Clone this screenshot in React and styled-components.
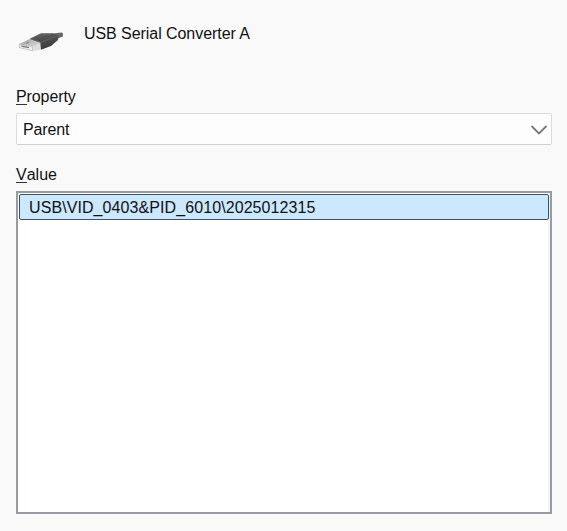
import React from "react";
import styled, { createGlobalStyle } from "styled-components";

const GlobalStyle = createGlobalStyle`
  * { box-sizing: border-box; }
  body {
    margin: 0;
    background: #f9f9f9;
    color: #111;
    font: 16px/20px "Liberation Sans", Arial, sans-serif;
  }
`;

const Page = styled.main`
  display: flex;
  flex-direction: column;
  height: 531px;
  padding: 24px 15px 17px 16px;
  overflow: hidden;
`;

const DeviceHeader = styled.header`
  display: flex;
  height: 63px;
  padding-left: 2px;
  gap: 18px;
`;

const DeviceIcon = styled.svg`
  width: 48px;
  height: 34px;
  flex: none;
`;

const DeviceName = styled.span`
  letter-spacing: -0.06px;
`;

const FieldLabel = styled.label`
  height: 20px;
  margin-bottom: ${(p) => p.$gap}px;
  letter-spacing: ${(p) => p.$spacing || 0}px;
`;

const AccessKey = styled.span`
  display: inline-block;
  height: 18px;
  border-bottom: 1px solid #333;
`;

const Select = styled.div`
  display: flex;
  align-items: center;
  justify-content: space-between;
  height: 32px;
  margin-bottom: 20px;
  padding: 1px 3px 0 6px;
  background: #fdfdfd;
  border: 1px solid #dcdcdc;
  border-bottom-color: #d0d0d0;
  border-radius: 2px;
  letter-spacing: -0.15px;
`;

const Chevron = styled.svg`
  width: 18px;
  height: 12px;
`;

const ValueList = styled.div`
  flex: 1;
  padding: 1px;
  background: #fff;
  border: 2px solid #979ca3;
  box-shadow: inset -2px 0 #f0f5fa;
`;

const ValueRow = styled.div`
  display: flex;
  align-items: center;
  height: 26px;
  padding: 2px 0 0 9px;
  background: #cce8ff;
  border: 1px solid #3f5161;
  border-radius: 2px;
  letter-spacing: 0.085px;
`;

function UsbPlug() {
  return (
    <DeviceIcon viewBox="0 0 48 34" aria-hidden="true">
      <defs>
        <linearGradient id="plugBody" x1="0" y1="0" x2="0.3" y2="1">
          <stop offset="0" stopColor="#6a6a6a" />
          <stop offset="0.45" stopColor="#4e4e4e" />
          <stop offset="1" stopColor="#3c3c3c" />
        </linearGradient>
        <linearGradient id="plugMetal" x1="0" y1="0" x2="1" y2="1">
          <stop offset="0" stopColor="#999" />
          <stop offset="0.5" stopColor="#c8c8c8" />
          <stop offset="1" stopColor="#ddd" />
        </linearGradient>
      </defs>
      <path d="m37 9.3 7-.8 1 1v3L41 14l-4-1z" fill="#686868" />
      <path d="m1 20.3 10-5 11.5 3.4.5 6.8-8.3 1.6L1.2 23.8z" fill="url(#plugMetal)" />
      <path d="m14.7 22.4 7.5-3.2.8 6.2-8.3 1.7z" fill="#dedede" />
      <path d="m1.2 20.4 13.3 2.2v4.3L1.5 23.6z" fill="#efefef" stroke="#aaa" strokeWidth=".5" />
      <path d="m3.5 22.1 7.5 1.5" stroke="#777" strokeWidth="1.1" />
      <path d="m7 19.2 3-1.4 2 .5-3 1.4z" fill="#888" />
      <path d="M11.2 15 23 9.3h13.3l4.5 2.5L40 16l-7 6-10 3.7-.7-7z" fill="url(#plugBody)" />
      <path d="m13 14.8 9.7 3.4 17-6.2" fill="none" stroke="#777" strokeWidth=".5" />
    </DeviceIcon>
  );
}

export default function App() {
  return (
    <>
      <GlobalStyle />
      <Page>
        <DeviceHeader>
          <UsbPlug />
          <DeviceName>USB Serial Converter A</DeviceName>
        </DeviceHeader>
        <FieldLabel $gap={6} $spacing={-0.1}>
          <AccessKey>P</AccessKey>roperty
        </FieldLabel>
        <Select role="combobox" aria-label="Property" aria-expanded="false">
          Parent
          <Chevron viewBox="0 0 18 12" aria-hidden="true">
            <path d="m1.5 2 7.5 7.5L16.5 2" fill="none" stroke="#777" strokeWidth="1.8" />
          </Chevron>
        </Select>
        <FieldLabel $gap={6}>
          <AccessKey>V</AccessKey>alue
        </FieldLabel>
        <ValueList role="listbox" aria-label="Value">
          <ValueRow role="option" aria-selected="true">
            USB\VID_0403&amp;PID_6010\2025012315
          </ValueRow>
        </ValueList>
      </Page>
    </>
  );
}
